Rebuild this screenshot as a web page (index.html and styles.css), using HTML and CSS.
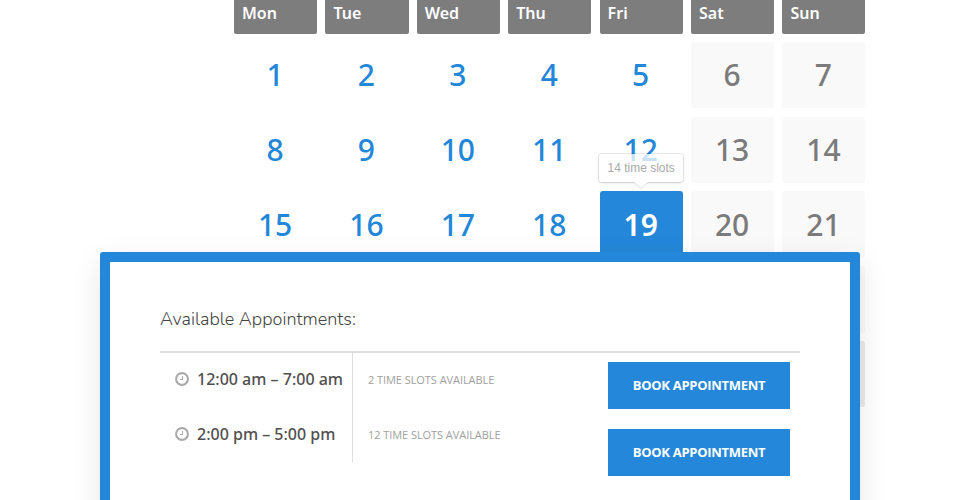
FILE: index.html
```html
<!DOCTYPE html>
<html lang="en">
<head>
  <meta charset="UTF-8" />
  <meta name="viewport" content="width=device-width, initial-scale=1.0"/>
  <title>Book an Appointment</title>
  <link rel="stylesheet" href="styles.css">
</head>
<body>

  <div class="calendar">
    <div class="day-name">Mon</div>
    <div class="day-name">Tue</div>
    <div class="day-name">Wed</div>
    <div class="day-name">Thu</div>
    <div class="day-name">Fri</div>
    <div class="day-name">Sat</div>
    <div class="day-name">Sun</div>

    <div class="day">1</div>
    <div class="day">2</div>
    <div class="day">3</div>
    <div class="day">4</div>
    <div class="day">5</div>
    <div class="day closed">6</div>
    <div class="day closed">7</div>

    <div class="day">8</div>
    <div class="day">9</div>
    <div class="day">10</div>
    <div class="day">11</div>
    <div class="day">12</div>
    <div class="day closed">13</div>
    <div class="day closed">14</div>

    <div class="day">15</div>
    <div class="day">16</div>
    <div class="day">17</div>
    <div class="day">18</div>
    <div class="day active">19<span class="tooltip">14 time slots</span></div>
    <div class="day closed">20</div>
    <div class="day closed">21</div>

    <div class="day closed last-col"></div>
    <div class="day next-month last-col"></div>
  </div>

  <div class="appointments">
    <h2>Available Appointments:</h2>
    <div class="slots">
      <div class="times">
        <p class="time">
          <svg class="clock" viewBox="0 0 14 14"><circle cx="7" cy="7" r="5.9"/><path d="M7.5 4v3.5H5"/></svg>
          <span>12:00 am – 7:00 am</span>
        </p>
        <p class="time">
          <svg class="clock" viewBox="0 0 14 14"><circle cx="7" cy="7" r="5.9"/><path d="M7.5 4v3.5H5"/></svg>
          <span>2:00 pm – 5:00 pm</span>
        </p>
      </div>
      <div class="counts">
        <p class="count">2 time slots available</p>
        <p class="count">12 time slots available</p>
      </div>
      <div class="actions">
        <button class="book-btn">Book Appointment</button>
        <button class="book-btn">Book Appointment</button>
      </div>
    </div>
  </div>

</body>
</html>
```

FILE: styles.css
```css
* { box-sizing: border-box; margin: 0; padding: 0; }

body {
  position: relative;
  font-family: 'Noto Sans', 'Open Sans', sans-serif;
  background-color: #fff;
  color: #505050;
  height: 500px;
  overflow: hidden;
}

.calendar {
  display: grid;
  grid-template-columns: repeat(7, 1fr);
  grid-template-rows: 33.5px repeat(5, 66.5px);
  gap: 8.3px;
  width: 631.5px;
  margin-left: 234px;
}

.day-name {
  padding: 0 8px;
  background: #7d7d7d;
  color: #fff;
  border-radius: 0 0 2px 2px;
  font-size: 16px;
  font-weight: 600;
  line-height: 26px;
}

.day {
  position: relative;
  display: flex;
  align-items: center;
  justify-content: center;
  padding-right: 1px;
  border-radius: 3px;
  color: #2286d9;
  font-size: 30px;
  font-weight: 500;
  line-height: 1;
}

.closed {
  background: #f9f9f9;
  color: #7b7b7b;
}

.next-month { background: #eaeaea; }

.last-col { grid-column: 7; }

.active {
  background: #2487d9;
  color: #fff;
  font-weight: 600;
}

.tooltip {
  position: absolute;
  left: 50%;
  bottom: 76px;
  transform: translateX(-50%);
  width: 84px;
  padding: 8px 0;
  background: rgba(255, 255, 255, 0.75);
  border-radius: 3px;
  box-shadow: 0 0 0 1px rgba(0, 0, 0, 0.07), 0 1px 3px rgba(0, 0, 0, 0.15);
  color: #aaa;
  font: 12px/12px 'Liberation Sans', Arial, sans-serif;
  text-align: center;
}

.tooltip::after {
  content: "";
  position: absolute;
  left: 35px;
  bottom: -6px;
  border: solid transparent;
  border-width: 6px 7px 0;
  border-top-color: #fff;
  filter: drop-shadow(0 1px 0 #ddd);
}

.appointments {
  position: absolute;
  left: 100px;
  top: 252px;
  width: 760px;
  height: 300px;
  padding: 43px 50px;
  background: #fff;
  border: 10px solid #2487d9;
  border-radius: 3px;
  box-shadow: 0 10px 30px rgba(0, 0, 0, 0.1);
}

h2 {
  height: 46px;
  font-family: 'Nunito', 'Open Sans', sans-serif;
  font-size: 18px;
  font-weight: 300;
  line-height: 28px;
  color: #444;
}

.slots {
  display: flex;
  border-top: 2px solid #ddd;
}

.times {
  width: 193px;
  height: 109px;
  padding-left: 15px;
  border-right: 1px solid #ddd;
}

.time {
  display: flex;
  align-items: center;
  gap: 8px;
  height: 55px;
  padding-bottom: 3px;
  font-size: 16px;
  font-weight: 500;
  white-space: nowrap;
}

.clock {
  width: 14px;
  height: 14px;
  flex: none;
  fill: none;
  stroke: #aaa;
  stroke-width: 2.1;
}

.clock path { stroke-width: 1.1; }

.counts {
  flex: 1;
  padding-left: 15px;
}

.count {
  height: 55px;
  color: #a0a0a0;
  font-family: 'Open Sans', sans-serif;
  font-size: 11px;
  letter-spacing: -0.06px;
  line-height: 54px;
  text-transform: uppercase;
}

.actions {
  display: flex;
  flex-direction: column;
  gap: 20px;
  padding: 9px 10px 0 0;
}

.book-btn {
  width: 182px;
  height: 47px;
  padding-bottom: 1px;
  background: #2487d9;
  color: #fff;
  border: none;
  cursor: pointer;
  font-family: 'Open Sans', sans-serif;
  font-size: 13px;
  font-weight: 700;
  letter-spacing: -0.3px;
  text-transform: uppercase;
}
```
